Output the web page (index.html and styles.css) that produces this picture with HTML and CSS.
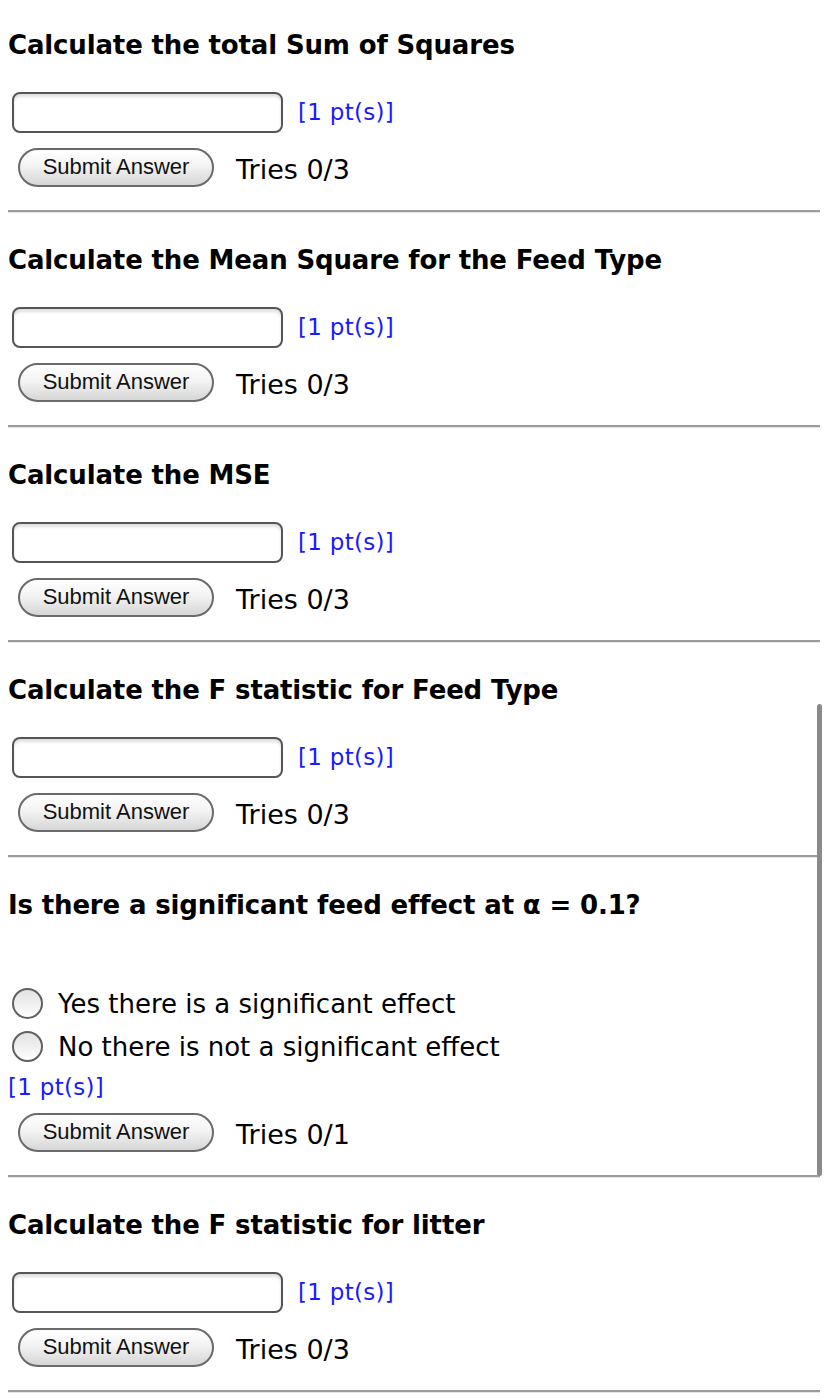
FILE: index.html
```html
<!DOCTYPE html>
<html>
<head>
<meta charset="utf-8">
<link rel="stylesheet" href="styles.css">
</head>
<body>
<div class="page">
  <section class="q first">
    <h2>Calculate the total Sum of Squares</h2>
    <div class="answer-row"><span class="field"></span><span class="pts">[1 pt(s)]</span></div>
    <div class="submit-row"><button class="btn">Submit Answer</button><span class="tries">Tries 0/3</span></div>
  </section>
  <hr class="rule">
  <section class="q">
    <h2>Calculate the Mean Square for the Feed Type</h2>
    <div class="answer-row"><span class="field"></span><span class="pts">[1 pt(s)]</span></div>
    <div class="submit-row"><button class="btn">Submit Answer</button><span class="tries">Tries 0/3</span></div>
  </section>
  <hr class="rule">
  <section class="q">
    <h2>Calculate the MSE</h2>
    <div class="answer-row"><span class="field"></span><span class="pts">[1 pt(s)]</span></div>
    <div class="submit-row"><button class="btn">Submit Answer</button><span class="tries">Tries 0/3</span></div>
  </section>
  <hr class="rule">
  <section class="q">
    <h2>Calculate the F statistic for Feed Type</h2>
    <div class="answer-row"><span class="field"></span><span class="pts">[1 pt(s)]</span></div>
    <div class="submit-row"><button class="btn">Submit Answer</button><span class="tries">Tries 0/3</span></div>
  </section>
  <hr class="rule">
  <section class="q radio-q">
    <h2>Is there a significant feed effect at α = 0.1?</h2>
    <div class="options">
      <label class="opt"><span class="radio"></span>Yes there is a significant effect</label>
      <label class="opt"><span class="radio"></span>No there is not a significant effect</label>
    </div>
    <div class="pts solo">[1 pt(s)]</div>
    <div class="submit-row near"><button class="btn">Submit Answer</button><span class="tries">Tries 0/1</span></div>
  </section>
  <hr class="rule">
  <section class="q">
    <h2>Calculate the F statistic for litter</h2>
    <div class="answer-row"><span class="field"></span><span class="pts">[1 pt(s)]</span></div>
    <div class="submit-row"><button class="btn">Submit Answer</button><span class="tries">Tries 0/3</span></div>
  </section>
  <hr class="rule">
  <div class="scrollbar"></div>
</div>
</body>
</html>
```

FILE: styles.css
```css
html, body {
  margin: 0;
  padding: 0;
  background: #fff;
}
.page {
  position: relative;
  padding: 0 8px;
  font-family: "DejaVu Sans", Verdana, sans-serif;
  color: #000;
}
.q {
  padding-top: 32px;
}
.q.first {
  padding-top: 30px;
}
.q h2 {
  margin: 0;
  height: 30px;
  line-height: 30px;
  font-size: 26px;
  letter-spacing: -0.15px;
  font-weight: bold;
  white-space: nowrap;
}
.answer-row {
  display: flex;
  align-items: center;
  margin-top: 32px;
  height: 40px;
}
.field {
  box-sizing: border-box;
  width: 271px;
  height: 41px;
  margin-left: 4px;
  border: 2px solid #555;
  border-radius: 8px;
  background: #fff;
  box-shadow: inset 0 3px 3px rgba(0,0,0,0.12);
}
.pts {
  color: #1a1aff;
  font-size: 23px;
  letter-spacing: 0.3px;
  margin-left: 15px;
  line-height: 26px;
}
.submit-row {
  display: flex;
  align-items: center;
  margin-top: 16px;
  height: 38px;
  margin-bottom: 24px;
}
.btn {
  box-sizing: border-box;
  width: 196px;
  height: 39px;
  margin: 0 0 0 10px;
  padding: 0;
  border: 2px solid #6a6a6a;
  border-radius: 20px;
  background: linear-gradient(#ffffff 0%, #f3f3f3 45%, #d6d6d6 100%);
  font-family: "Liberation Sans", Arial, sans-serif;
  font-size: 22px;
  color: #111;
}
.tries {
  margin-left: 22px;
  font-size: 27px;
  line-height: 30px;
  padding-top: 5px;
}
.rule {
  margin: 0;
  height: 0;
  border: 0;
  border-top: 2px solid #9b9b9b;
  border-bottom: 1px solid #e6e6e6;
}
.radio-q h2 {
  margin-bottom: 62px;
}
.options {
  display: flex;
  flex-direction: column;
}
.opt {
  display: flex;
  align-items: center;
  height: 43px;
  font-size: 26px;
}
.radio {
  box-sizing: border-box;
  width: 31px;
  height: 31px;
  margin-left: 4px;
  margin-right: 15px;
  border: 2px solid #606060;
  border-radius: 50%;
  background: linear-gradient(#e2e2e2, #fdfdfd);
}
.pts.solo {
  margin-left: 0;
  margin-top: 6px;
  height: 26px;
}
.submit-row.near {
  margin-top: 13px;
}
.scrollbar {
  position: absolute;
  left: 817px;
  top: 704px;
  width: 5px;
  height: 472px;
  border-radius: 3px;
  background: #8a8a8a;
}
```
